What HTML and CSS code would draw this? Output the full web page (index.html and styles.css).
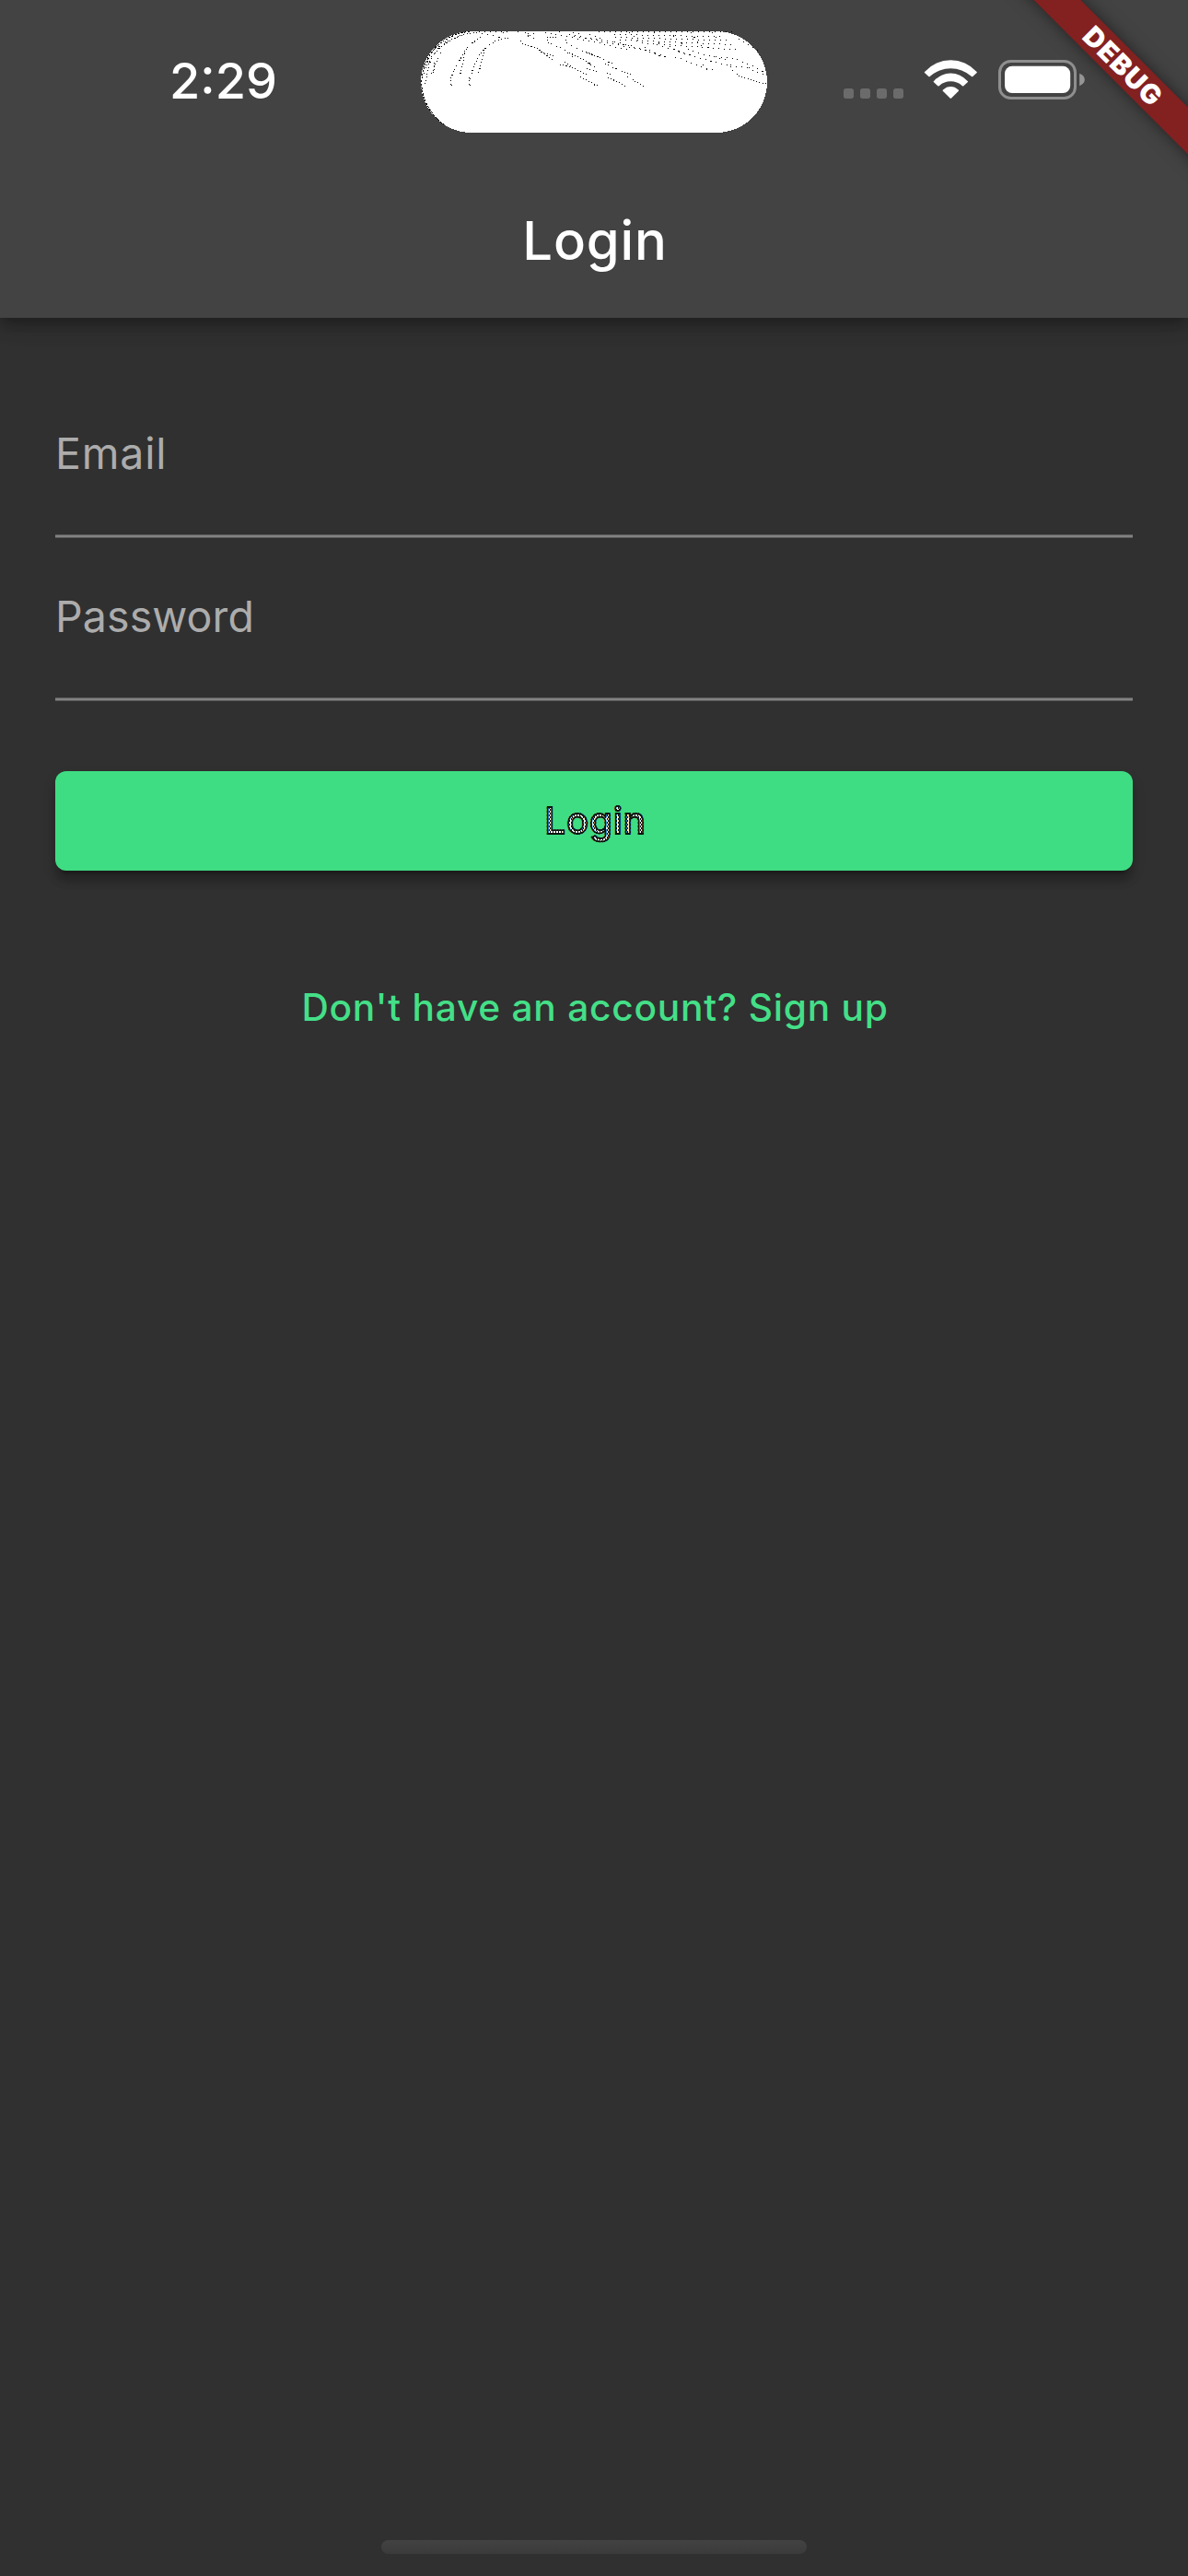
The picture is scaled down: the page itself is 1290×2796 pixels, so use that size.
FILE: index.html
```html
<!DOCTYPE html>
<html lang="en">
<head>
<meta charset="utf-8">
<title>Login</title>
<link rel="stylesheet" href="styles.css">
</head>
<body>
<div class="screen">
  <header class="app-bar">
    <div class="status-bar">
      <span class="time">2:29</span>
      <svg class="island" viewBox="51 42 1128 330" shape-rendering="crispEdges">
        <rect class="island-body" x="51" y="42" width="1128" height="330" rx="165"/>
        <g class="specks">
          <path class="edge" d="M210 43C150 48 90 85 67 145C60 165 55 185 53 210C55 265 80 310 125 345"/>
          <path class="dense" d="M235 46C160 52 105 90 80 140L64 218M180 56L122 80M112 90L72 145M100 128L70 155M115 110L84 185M96 145L92 185M85 110L60 180"/>
          <path class="dense" d="M245 62L208 88M204 92L188 120L162 160L148 198M194 106L190 142L178 186M150 192L148 220L158 212M335 64L300 70L270 90M262 96L240 120L222 160L210 198M256 112L246 154L236 186M210 192L208 220L218 212"/>
          <path d="M240 44H345M250 50L300 58M320 46L340 68M290 50L310 64M366 44L430 68M390 46L420 64M400 50H430"/>
          <path class="trail" d="M376 72L384 82L430 98L480 134M442 108L490 126M504 150L550 162L590 182M520 142L545 158M570 190L606 208L628 220M614 218L626 212"/>
          <path class="trail" d="M463 60L464 78L515 100L550 128M470 62H500M534 112L580 134L612 156M592 162L630 174M600 146L622 162M656 178L675 184M660 192L695 208L716 220"/>
          <path class="trail" d="M522 68L526 80L575 104L640 130M590 112L612 118M626 124L680 150M650 148L670 156M676 160L738 184M722 190L745 202L776 220"/>
          <path d="M455 46L540 62L640 82L730 104M500 44L600 66L680 84L790 106M550 58L660 74L770 100L840 122M545 46L580 52M600 52L650 68"/>
          <path d="M630 44H1070M680 52L1040 60M685 62L1060 72M700 70L1070 86M770 80L1080 102M682 76L740 90M730 46L780 92M860 44L910 88M930 46L970 98M810 46L830 86M1000 46L1030 84M1070 56L1160 112"/>
          <path d="M780 94L830 122L900 130L940 150L975 160L1015 172M860 90L900 112L1000 140L1060 156M920 100L980 120L1060 138M820 86L870 100L940 124M1010 124L1070 130L1130 154L1175 178M1060 156L1110 160L1176 186M970 150L985 168M1060 150L1070 178M1120 160L1140 180"/>
          <path class="trail" d="M1080 180L1090 190L1125 200L1175 213"/>
        </g>
      </svg>
      <svg class="status-icons" viewBox="0 0 262 43">
        <g class="signal">
          <rect x="0" y="31" width="11" height="11" rx="2.7"/>
          <rect x="18" y="31" width="11" height="11" rx="2.7"/>
          <rect x="36" y="31" width="11" height="11" rx="2.7"/>
          <rect x="54" y="31" width="11" height="11" rx="2.7"/>
        </g>
        <path class="wifi" transform="translate(-26 -65) scale(.33333)" d="M343 233A113 113 0 0 1 511 233Q514 235 512 237L499 249Q497 251 494 248A101 101 0 0 0 360 248Q357 251 355 249L342 237Q340 235 343 233ZM373 263A72 72 0 0 1 481 263Q485 265 482 268L469 280Q467 282 464 279A56 56 0 0 0 390 279Q387 282 385 280L372 268Q369 265 373 263ZM403 292A33 33 0 0 1 451 292Q455 294 452 297L430 319Q427 322 424 319L402 297Q399 294 403 292Z"/>
        <rect class="battery-case" x="169.5" y="1.5" width="82" height="40" rx="12"/>
        <rect class="battery-level" x="175" y="6.8" width="71.2" height="29.2" rx="8"/>
        <path class="battery-tip" d="M256.2 14.8C260 16.5 261.8 18.5 261.8 21.5S260 26.5 256.2 28.2Z"/>
      </svg>
    </div>
    <h1 class="title">Login</h1>
  </header>
  <main class="form">
    <div class="field"><span class="label email">Email</span></div>
    <div class="field"><span class="label password">Password</span></div>
    <button class="submit"><span class="submit-text">Login</span></button>
    <a class="signup">Don't have an account? Sign up</a>
  </main>
  <div class="home-indicator"></div>
  <div class="banner">DEBUG</div>
</div>
</body>
</html>
```
FILE: styles.css
```css
* { box-sizing: border-box; }

body {
  margin: 0;
  background: #303030;
  font-family: Inter, "Liberation Sans", sans-serif;
}

.screen {
  position: relative;
  display: flex;
  flex-direction: column;
  width: 1290px;
  height: 2796px;
  overflow: hidden;
  background: #303030;
}

.app-bar {
  height: 345px;
  background: #434343;
  box-shadow: 0 6px 12px -3px rgba(0, 0, 0, .2), 0 12px 15px rgba(0, 0, 0, .14), 0 3px 30px rgba(0, 0, 0, .12);
}

.status-bar {
  display: grid;
  grid-template-columns: 457px 376px 1fr;
  height: 177px;
}

.time {
  padding-left: 184px;
  line-height: 175px;
  font-size: 54px;
  font-weight: 550;
  color: #fff;
}

.island { width: 376px; height: 110px; margin-top: 34px; }
.island-body { fill: #fff; }
.specks { fill: none; stroke: #000; stroke-width: 3; stroke-dasharray: 3 15; }
.specks .dense { stroke-dasharray: 3 6 3 9; }
.specks .edge { stroke-dasharray: 7 4; }
.specks .trail { stroke-dasharray: 3 7; }

.status-icons { width: 262px; height: 43px; margin: 65px 0 0 83px; }
.signal { fill: #6b6b6b; }
.wifi, .battery-level { fill: #fff; }
.battery-case { fill: none; stroke: #8f8f8f; stroke-width: 3; }
.battery-tip { fill: #969696; }

.title {
  margin: 0;
  padding-left: 2px;
  line-height: 168px;
  text-align: center;
  font-size: 58px;
  font-weight: 500;
  letter-spacing: .8px;
  color: #fff;
}

.form {
  display: flex;
  flex-direction: column;
  flex: 1;
  padding: 62px 60px 0;
}

.field {
  height: 177px;
  padding-top: 45px;
  background:
    linear-gradient(#828282, #828282) 0 174px / 100% 2px no-repeat,
    linear-gradient(#5b5b5b, #5b5b5b) 0 173px / 100% 4px no-repeat;
}

.label {
  display: block;
  line-height: 80px;
  font-size: 46.5px;
  font-weight: 400;
  color: #acacac;
}

.email { letter-spacing: .8px; }
.password { letter-spacing: .1px; }

.submit {
  height: 108px;
  margin-top: 76px;
  padding: 0 0 0 3px;
  border: 0;
  border-radius: 12px;
  background: #3fdd83;
  box-shadow: 0 9px 3px -6px rgba(0, 0, 0, .2), 0 12px 8px rgba(0, 0, 0, .17), 0 8px 15px rgba(0, 0, 0, .12);
  font-family: inherit;
}

.submit-text {
  font-size: 40px;
  font-weight: 500;
  line-height: 60px;
  letter-spacing: .9px;
  color: transparent;
  background: repeating-conic-gradient(#fff 0 25%, #111 0 50%) 0 0 / 3px 4px;
  -webkit-background-clip: text;
  background-clip: text;
  -webkit-text-stroke: 1.8px #07160d;
}

.signup {
  align-self: center;
  margin-top: 119px;
  padding-left: 2px;
  line-height: 60px;
  font-size: 40.7px;
  font-weight: 500;
  letter-spacing: .75px;
  color: #44df87;
}

.home-indicator {
  align-self: center;
  width: 462px;
  height: 15px;
  margin-bottom: 24px;
  border-radius: 8px;
  background: linear-gradient(#424242, #3b3b3b);
}

.banner {
  position: absolute;
  left: 1018px;
  top: 52px;
  width: 400px;
  height: 36px;
  padding-left: 5px;
  line-height: 36px;
  text-align: center;
  transform: rotate(45deg);
  background: #832020;
  box-shadow: 0 0 18px rgba(0, 0, 0, .5);
  font-size: 29.5px;
  font-weight: 900;
  letter-spacing: 1.1px;
  color: #fff;
}
```
